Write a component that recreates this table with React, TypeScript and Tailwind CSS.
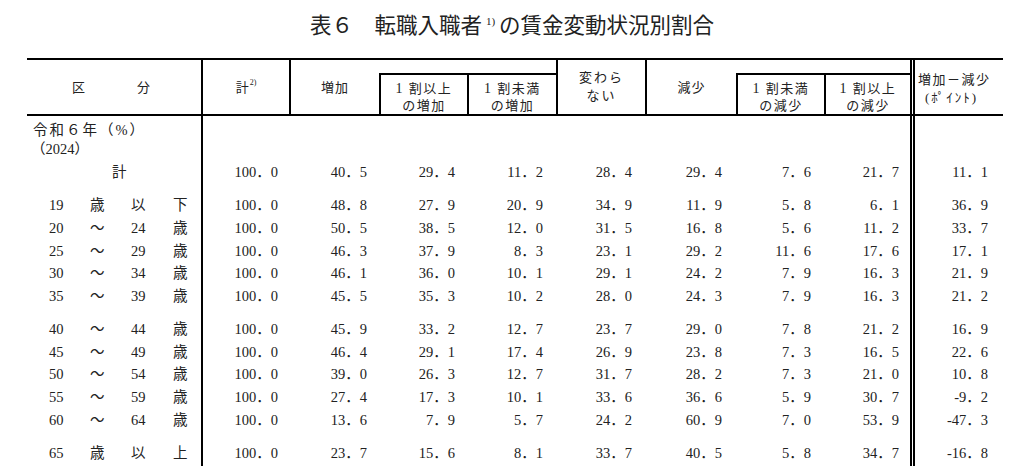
import React from "react";

// column geometry of the numeric block (203px -> 910px)
const mid = [
  { w: "w-[88px]", pr: "pr-[13px]" },
  { w: "w-[88px]", pr: "pr-[12px]" },
  { w: "w-[90px]", pr: "pr-[14px]" },
  { w: "w-[89px]", pr: "pr-[15px]" },
  { w: "w-[89px]", pr: "pr-[15px]" },
  { w: "w-[89px]", pr: "pr-[14px]" },
  { w: "w-[88px]", pr: "pr-[13px]" },
  { w: "w-[86px]", pr: "pr-[11px]" },
];

const fmt = (v: string) => v.replace(".", "．");

type RowProps = { h: string; label?: React.ReactNode; vals?: string[] };

function Row({ h, label, vals }: RowProps) {
  return (
    <div className={`flex ${h}`}>
      <div className="flex w-[176px] items-center border-r-2 border-black">{label}</div>
      <div className="flex w-[712px] border-r-[5px] border-double border-black">
        {mid.map((c, i) => (
          <div key={i} className={`flex items-center justify-end ${c.w} ${c.pr}`}>
            {vals ? fmt(vals[i]) : null}
          </div>
        ))}
      </div>
      <div className="flex w-[88px] items-center justify-end pr-[15px]">
        {vals ? fmt(vals[8]) : null}
      </div>
    </div>
  );
}

function Age({ a, b, c, d }: { a: string; b: string; c: string; d: string }) {
  return (
    <div className="grid grid-cols-[41px_41px_42px_41px] pl-[22px]">
      <span>{a}</span>
      <span>{b}</span>
      <span>{c}</span>
      <span>{d}</span>
    </div>
  );
}

const groups: { label: [string, string, string, string]; vals: string[] }[][] = [
  [
    { label: ["19", "歳", "以", "下"], vals: ["100.0", "48.8", "27.9", "20.9", "34.9", "11.9", "5.8", "6.1", "36.9"] },
    { label: ["20", "～", "24", "歳"], vals: ["100.0", "50.5", "38.5", "12.0", "31.5", "16.8", "5.6", "11.2", "33.7"] },
    { label: ["25", "～", "29", "歳"], vals: ["100.0", "46.3", "37.9", "8.3", "23.1", "29.2", "11.6", "17.6", "17.1"] },
    { label: ["30", "～", "34", "歳"], vals: ["100.0", "46.1", "36.0", "10.1", "29.1", "24.2", "7.9", "16.3", "21.9"] },
    { label: ["35", "～", "39", "歳"], vals: ["100.0", "45.5", "35.3", "10.2", "28.0", "24.3", "7.9", "16.3", "21.2"] },
  ],
  [
    { label: ["40", "～", "44", "歳"], vals: ["100.0", "45.9", "33.2", "12.7", "23.7", "29.0", "7.8", "21.2", "16.9"] },
    { label: ["45", "～", "49", "歳"], vals: ["100.0", "46.4", "29.1", "17.4", "26.9", "23.8", "7.3", "16.5", "22.6"] },
    { label: ["50", "～", "54", "歳"], vals: ["100.0", "39.0", "26.3", "12.7", "31.7", "28.2", "7.3", "21.0", "10.8"] },
    { label: ["55", "～", "59", "歳"], vals: ["100.0", "27.4", "17.3", "10.1", "33.6", "36.6", "5.9", "30.7", "-9.2"] },
    { label: ["60", "～", "64", "歳"], vals: ["100.0", "13.6", "7.9", "5.7", "24.2", "60.9", "7.0", "53.9", "-47.3"] },
  ],
  [
    { label: ["65", "歳", "以", "上"], vals: ["100.0", "23.7", "15.6", "8.1", "33.7", "40.5", "5.8", "34.7", "-16.8"] },
  ],
];

export default function App() {
  return (
    <div className="h-[466px] w-[1024px] overflow-hidden bg-white font-['Liberation_Serif','Noto_Sans_CJK_JP',serif] text-[#222]">
      {/* title */}
      <div className="flex h-[58px] items-center justify-center pb-[4px] text-[21.5px] leading-none">
        <span>表６　転職入職者</span>
        <span className="relative -top-[6px] px-[4px] text-[11px]">1)</span>
        <span>の賃金変動状況別割合</span>
      </div>

      <div className="ml-[27px] w-[976px] border-t-2 border-black">
        {/* header */}
        <div className="flex h-[56px] border-b-2 border-black text-[13px] leading-none">
          <div className="flex w-[176px] items-center gap-[52px] border-r-2 border-black pl-[45px]">
            <span>区</span>
            <span>分</span>
          </div>
          <div className="flex w-[88px] items-center justify-center border-r-2 border-black">
            <span>計</span>
            <span className="relative -top-[4px] pl-[1px] text-[8px]">2)</span>
          </div>
          <div className="flex w-[267px] border-r-2 border-black">
            <div className="flex w-[88px] items-center justify-center tracking-[1px]">増加</div>
            <div className="mt-[13px] flex flex-1 border-l-2 border-t-2 border-black tracking-[1.5px]">
              <div className="flex w-[88px] flex-col items-center justify-center border-r-2 border-black pt-[4px] leading-[17px]">
                <span><span className="text-[14px]">1</span> 割以上</span>
                <span>の増加</span>
              </div>
              <div className="flex flex-1 flex-col items-center justify-center pt-[4px] leading-[17px]">
                <span><span className="text-[14px]">1</span> 割未満</span>
                <span>の増加</span>
              </div>
            </div>
          </div>
          <div className="flex w-[89px] flex-col items-center justify-center border-r-2 border-black leading-[18px] tracking-[2px]">
            <span>変わら</span>
            <span>ない</span>
          </div>
          <div className="flex w-[268px] border-r-[5px] border-double border-black">
            <div className="flex w-[89px] items-center justify-center tracking-[1px]">減少</div>
            <div className="mt-[13px] flex flex-1 border-l-2 border-t-2 border-black tracking-[1.5px]">
              <div className="flex w-[88px] flex-col items-center justify-center border-r-2 border-black pt-[4px] leading-[17px]">
                <span><span className="text-[14px]">1</span> 割未満</span>
                <span>の減少</span>
              </div>
              <div className="flex flex-1 flex-col items-center justify-center pt-[4px] leading-[17px]">
                <span><span className="text-[14px]">1</span> 割以上</span>
                <span>の減少</span>
              </div>
            </div>
          </div>
          <div className="flex w-[88px] flex-col justify-center pl-[3px] pt-[3px] leading-[18px]">
            <span className="tracking-[1.5px]">増加－減少</span>
            <span className="pl-[7px] text-[13px] tracking-[2px]">(ﾎﾟｲﾝﾄ)</span>
          </div>
        </div>

        {/* body */}
        <div className="text-[14.5px] leading-none">
          <Row h="h-[4px]" />
          <Row
            h="h-[20px]"
            label={<span className="pl-[6px] tracking-[2px]">令和６年（%）</span>}
          />
          <Row h="h-[18px]" label={<span className="pl-[4px]">（2024）</span>} />
          <Row
            h="h-[28px]"
            label={<span className="pl-[85px]">計</span>}
            vals={["100.0", "40.5", "29.4", "11.2", "28.4", "29.4", "7.6", "21.7", "11.1"]}
          />
          <Row h="h-[8px]" />
          {groups.map((g, gi) => (
            <React.Fragment key={gi}>
              {gi > 0 && <Row h="h-[10px]" />}
              {g.map((r, ri) => (
                <Row
                  key={ri}
                  h="h-[22.75px]"
                  label={<Age a={r.label[0]} b={r.label[1]} c={r.label[2]} d={r.label[3]} />}
                  vals={r.vals}
                />
              ))}
            </React.Fragment>
          ))}
          <Row h="h-[30px]" />
        </div>
      </div>
    </div>
  );
}
